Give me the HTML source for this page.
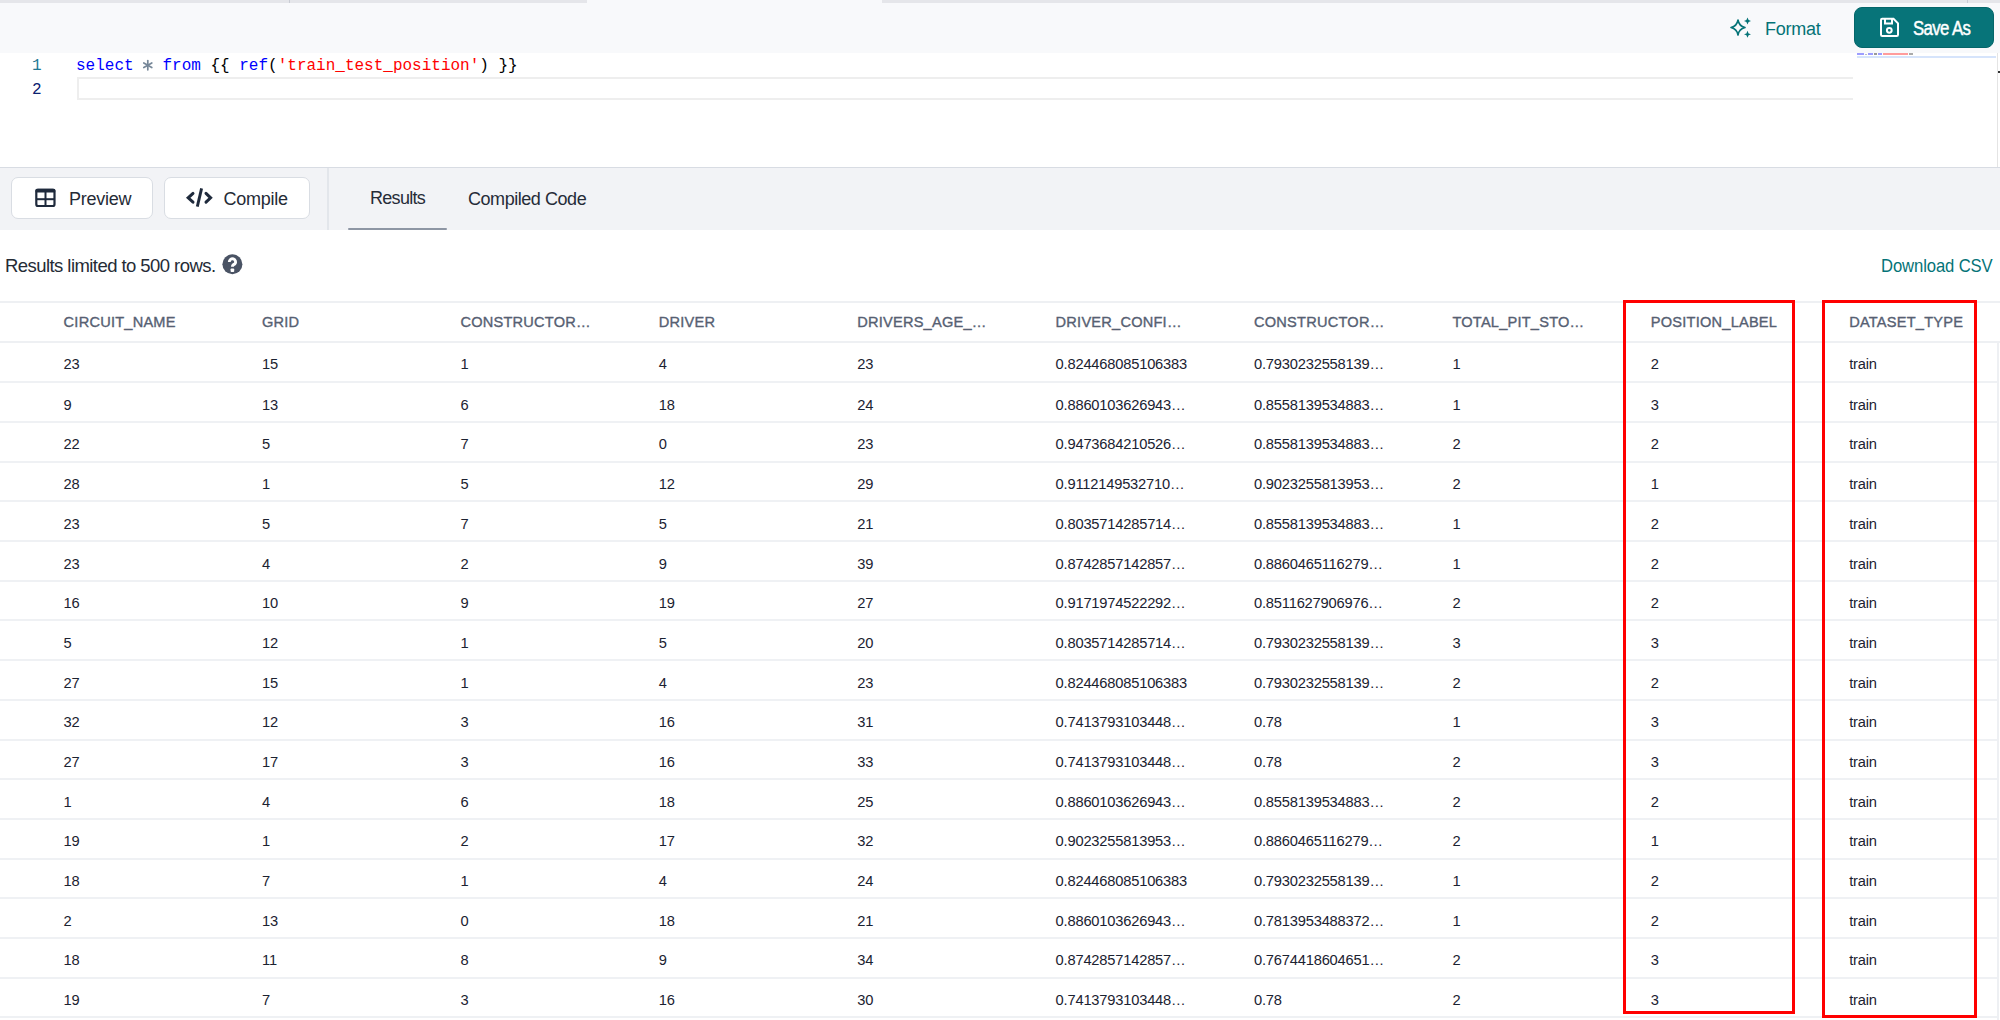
<!DOCTYPE html>
<html><head><meta charset="utf-8">
<style>
html,body{margin:0;padding:0;width:2000px;height:1020px;overflow:hidden;background:#fff;}
body{position:relative;font-family:"Liberation Sans",sans-serif;}
.abs{position:absolute;}
#topbar{position:absolute;left:0;top:0;width:2000px;height:53px;background:#f8f9fb;}
.tstrip{position:absolute;top:0;height:3px;background:#e5e6ea;}
#editor{position:absolute;left:0;top:53px;width:2000px;height:114px;background:#fff;}
.ln{position:absolute;font-family:"Liberation Mono",monospace;font-size:16px;line-height:24px;white-space:pre;}
.code{position:absolute;left:76px;top:54.3px;font-family:"Liberation Mono",monospace;font-size:16px;line-height:24px;white-space:pre;color:#000;}
.kw{color:#0000ff}.op{color:#778899}.str{color:#ff0000}.pn{color:#000}
#curline{position:absolute;left:76.5px;top:77px;width:1776px;height:23px;box-sizing:border-box;border:2.5px solid #eeeeee;border-right:none;}
#toolbar{position:absolute;left:0;top:167px;width:2000px;height:63px;background:#f2f3f6;border-top:1.5px solid #d8dce3;box-sizing:border-box;}
.btn{position:absolute;top:177px;height:42px;background:#fff;border:1.5px solid #d9dde3;border-radius:7px;box-sizing:border-box;}
.btxt{position:absolute;font-size:18px;line-height:20px;color:#252b36;white-space:pre;}
.tab{position:absolute;font-size:18px;line-height:20px;color:#262c38;white-space:pre;}
.th{position:absolute;font-size:14.6px;line-height:18px;color:#566072;white-space:pre;letter-spacing:0.22px;-webkit-text-stroke:0.35px #566072;}
.td{position:absolute;font-size:14.7px;line-height:18px;color:#1b2231;white-space:pre;letter-spacing:-0.2px;}
.hline{position:absolute;left:0;width:2000px;background:#eef0f3;}
.rline{position:absolute;left:0;width:1998px;height:2px;background:#eff1f4;}
.red{position:absolute;border:3px solid #ff0000;box-sizing:border-box;}
</style></head><body>
<div id="topbar">
  <div class="tstrip" style="left:0;width:587px"></div>
  <div class="tstrip" style="left:882px;width:1118px"></div>
  <div class="abs" style="left:289px;top:0;width:1px;height:3px;background:#c9ccd4"></div>
  <div class="abs" style="left:1967px;top:0;width:1px;height:3px;background:#c9ccd4"></div>
  <svg class="abs" style="left:1728px;top:17px" width="24" height="22" viewBox="0 0 24 22">
    <path d="M10 3 Q11 9 17 10.5 Q11 12 10 18 Q9 12 3 10.5 Q9 9 10 3 Z" fill="none" stroke="#047377" stroke-width="1.6" stroke-linejoin="round"/>
    <path d="M19.5 0.5 L20.6 3.1 L23 4 L20.6 4.9 L19.5 7.5 L18.4 4.9 L16 4 L18.4 3.1 Z" fill="#047377"/>
    <path d="M19.5 13.8 L20.6 16.4 L23 17.3 L20.6 18.2 L19.5 20.8 L18.4 18.2 L16 17.3 L18.4 16.4 Z" fill="#047377"/>
  </svg>
  <div class="abs" style="left:1765px;top:18.5px;font-size:18px;line-height:20px;color:#047377;letter-spacing:-0.25px;">Format</div>
  <div class="abs" style="left:1854px;top:6.5px;width:140px;height:41.5px;background:#077479;border:1px solid #04666a;box-sizing:border-box;border-radius:8px;"></div>
  <svg class="abs" style="left:1879px;top:17px" width="21" height="21" viewBox="0 0 21 21">
    <path d="M2 3 Q2 1.8 3.2 1.8 L14.5 1.8 L19 6.3 L19 17.8 Q19 19 17.8 19 L3.2 19 Q2 19 2 17.8 Z" fill="none" stroke="#fff" stroke-width="2"/>
    <path d="M6 2 L6 6.5 L13 6.5 L13 2" fill="none" stroke="#fff" stroke-width="2"/>
    <circle cx="10.3" cy="13.3" r="2.4" fill="none" stroke="#fff" stroke-width="2"/>
  </svg>
  <div class="abs" style="left:1912.5px;top:17px;font-size:19.5px;line-height:22px;color:#fff;letter-spacing:-0.7px;-webkit-text-stroke:0.45px #fff;transform-origin:0 0;transform:scaleX(0.86);white-space:pre">Save As</div>
</div>
<div id="editor"></div>
<div class="ln" style="left:32px;top:54.3px;color:#237893">1</div>
<div class="ln" style="left:32px;top:78.3px;color:#0b216f">2</div>
<div id="curline"></div>
<svg class="abs" style="left:140px;top:57px" width="16" height="16" viewBox="0 0 16 16">
  <g stroke="#778899" stroke-width="1.7" stroke-linecap="round"><line x1="7.8" y1="3.6" x2="7.8" y2="12.8"/><line x1="3.8" y1="5.9" x2="11.8" y2="10.5"/><line x1="3.8" y1="10.5" x2="11.8" y2="5.9"/></g>
</svg>
<div class="abs" style="left:1857px;top:52.5px;width:7px;height:2.2px;background:#9d9dff"></div>
<div class="abs" style="left:1865px;top:53.5px;width:2px;height:1.2px;background:#b8c0c8"></div>
<div class="abs" style="left:1868px;top:52.5px;width:5px;height:2.2px;background:#9d9dff"></div>
<div class="abs" style="left:1874px;top:52.5px;width:3px;height:2.2px;background:#999"></div>
<div class="abs" style="left:1878px;top:52.5px;width:4px;height:2.2px;background:#9d9dff"></div>
<div class="abs" style="left:1883px;top:52.5px;width:25px;height:2.2px;background:#ff9c9c"></div>
<div class="abs" style="left:1909px;top:52.5px;width:4px;height:2.2px;background:#aaa"></div>
<div class="abs" style="left:1997px;top:71px;width:3px;height:2px;background:#333"></div>

<div class="code"><span class="kw">select</span> <span class="op"> </span> <span class="kw">from</span> {{ <span class="kw">ref</span>(<span class="str">'train_test_position'</span>) }}</div>
<div class="abs" style="left:1997px;top:53px;width:1px;height:114px;background:#e4e4e4"></div>
<div class="abs" style="left:1857px;top:55.5px;width:139px;height:2px;background:#d6e4fb"></div>
<div id="toolbar"></div>
<div class="abs" style="left:327px;top:168px;width:1.5px;height:62px;background:#e3e6eb"></div>
<div class="btn" style="left:11px;width:142px"></div>
<svg class="abs" style="left:34px;top:187px" width="24" height="22" viewBox="0 0 24 22">
  <rect x="2.3" y="2.8" width="18.2" height="16.2" rx="1.8" fill="none" stroke="#1f2a3c" stroke-width="2.2"/>
  <rect x="1.4" y="1.7" width="20" height="3.8" rx="1.5" fill="#1f2a3c"/>
  <rect x="10.5" y="4" width="2" height="15" fill="#1f2a3c"/>
  <rect x="2" y="11.2" width="19" height="2" fill="#1f2a3c"/>
</svg>
<div class="btxt" style="left:69px;top:189px;letter-spacing:-0.25px">Preview</div>
<div class="btn" style="left:164px;width:145.5px"></div>
<svg class="abs" style="left:184px;top:186px" width="32" height="24" viewBox="0 0 32 24">
  <path d="M9 7.4 L4.2 11.8 L9 16.2" fill="none" stroke="#1f2a3c" stroke-width="3" stroke-linecap="round" stroke-linejoin="miter"/>
  <path d="M22 7.4 L26.6 11.8 L22 16.2" fill="none" stroke="#1f2a3c" stroke-width="3" stroke-linecap="round" stroke-linejoin="miter"/>
  <path d="M13.3 20.6 L17.6 2.3" fill="none" stroke="#1f2a3c" stroke-width="2.9" stroke-linecap="butt"/>
</svg>
<div class="btxt" style="left:223.5px;top:189px;letter-spacing:-0.25px">Compile</div>
<div class="tab" style="left:370px;top:188px;letter-spacing:-0.7px">Results</div>
<div class="tab" style="left:468px;top:188.5px;letter-spacing:-0.45px">Compiled Code</div>
<div class="abs" style="left:348px;top:227.5px;width:98.5px;height:2.5px;background:#8e96a4;border-radius:1px"></div>

<div class="abs" style="left:5px;top:255px;font-size:18.5px;line-height:22px;color:#252b36;letter-spacing:-0.56px;white-space:pre">Results limited to 500 rows.</div>
<svg class="abs" style="left:222px;top:253.5px" width="21" height="21" viewBox="0 0 21 21">
  <circle cx="10.4" cy="10.3" r="10" fill="#4a5364"/>
  <path d="M7.3 8 A3.15 3.15 0 1 1 12.9 9.9 Q10.4 11.1 10.4 12.8" fill="none" stroke="#fff" stroke-width="2.9" stroke-linecap="butt"/>
  <rect x="8.6" y="14.4" width="3.6" height="3.6" rx="0.8" fill="#fff"/>
</svg>
<div class="abs" style="left:1881px;top:255px;font-size:18.5px;line-height:22px;color:#047377;letter-spacing:-0.12px;white-space:pre;transform-origin:0 0;transform:scaleX(0.9)">Download CSV</div>

<div class="hline" style="top:300.8px;height:2px"></div>
<div class="th" style="left:63.6px;top:313px">CIRCUIT_NAME</div>
<div class="th" style="left:262.0px;top:313px">GRID</div>
<div class="th" style="left:460.4px;top:313px">CONSTRUCTOR…</div>
<div class="th" style="left:658.8px;top:313px">DRIVER</div>
<div class="th" style="left:857.2px;top:313px">DRIVERS_AGE_…</div>
<div class="th" style="left:1055.6px;top:313px">DRIVER_CONFI…</div>
<div class="th" style="left:1254.0px;top:313px">CONSTRUCTOR…</div>
<div class="th" style="left:1452.4px;top:313px">TOTAL_PIT_STO…</div>
<div class="th" style="left:1650.8px;top:313px">POSITION_LABEL</div>
<div class="th" style="left:1849.2px;top:313px">DATASET_TYPE</div>
<div class="hline" style="top:340.5px;height:2px"></div>
<div class="td" style="left:63.6px;top:355.30px">23</div>
<div class="td" style="left:262.0px;top:355.30px">15</div>
<div class="td" style="left:460.4px;top:355.30px">1</div>
<div class="td" style="left:658.8px;top:355.30px">4</div>
<div class="td" style="left:857.2px;top:355.30px">23</div>
<div class="td" style="left:1055.6px;top:355.30px">0.824468085106383</div>
<div class="td" style="left:1254.0px;top:355.30px">0.7930232558139…</div>
<div class="td" style="left:1452.4px;top:355.30px">1</div>
<div class="td" style="left:1650.8px;top:355.30px">2</div>
<div class="td" style="left:1849.2px;top:355.30px">train</div>
<div class="rline" style="top:381.30px"></div>
<div class="td" style="left:63.6px;top:395.79px">9</div>
<div class="td" style="left:262.0px;top:395.79px">13</div>
<div class="td" style="left:460.4px;top:395.79px">6</div>
<div class="td" style="left:658.8px;top:395.79px">18</div>
<div class="td" style="left:857.2px;top:395.79px">24</div>
<div class="td" style="left:1055.6px;top:395.79px">0.8860103626943…</div>
<div class="td" style="left:1254.0px;top:395.79px">0.8558139534883…</div>
<div class="td" style="left:1452.4px;top:395.79px">1</div>
<div class="td" style="left:1650.8px;top:395.79px">3</div>
<div class="td" style="left:1849.2px;top:395.79px">train</div>
<div class="rline" style="top:420.99px"></div>
<div class="td" style="left:63.6px;top:435.48px">22</div>
<div class="td" style="left:262.0px;top:435.48px">5</div>
<div class="td" style="left:460.4px;top:435.48px">7</div>
<div class="td" style="left:658.8px;top:435.48px">0</div>
<div class="td" style="left:857.2px;top:435.48px">23</div>
<div class="td" style="left:1055.6px;top:435.48px">0.9473684210526…</div>
<div class="td" style="left:1254.0px;top:435.48px">0.8558139534883…</div>
<div class="td" style="left:1452.4px;top:435.48px">2</div>
<div class="td" style="left:1650.8px;top:435.48px">2</div>
<div class="td" style="left:1849.2px;top:435.48px">train</div>
<div class="rline" style="top:460.68px"></div>
<div class="td" style="left:63.6px;top:475.17px">28</div>
<div class="td" style="left:262.0px;top:475.17px">1</div>
<div class="td" style="left:460.4px;top:475.17px">5</div>
<div class="td" style="left:658.8px;top:475.17px">12</div>
<div class="td" style="left:857.2px;top:475.17px">29</div>
<div class="td" style="left:1055.6px;top:475.17px">0.9112149532710…</div>
<div class="td" style="left:1254.0px;top:475.17px">0.9023255813953…</div>
<div class="td" style="left:1452.4px;top:475.17px">2</div>
<div class="td" style="left:1650.8px;top:475.17px">1</div>
<div class="td" style="left:1849.2px;top:475.17px">train</div>
<div class="rline" style="top:500.37px"></div>
<div class="td" style="left:63.6px;top:514.86px">23</div>
<div class="td" style="left:262.0px;top:514.86px">5</div>
<div class="td" style="left:460.4px;top:514.86px">7</div>
<div class="td" style="left:658.8px;top:514.86px">5</div>
<div class="td" style="left:857.2px;top:514.86px">21</div>
<div class="td" style="left:1055.6px;top:514.86px">0.8035714285714…</div>
<div class="td" style="left:1254.0px;top:514.86px">0.8558139534883…</div>
<div class="td" style="left:1452.4px;top:514.86px">1</div>
<div class="td" style="left:1650.8px;top:514.86px">2</div>
<div class="td" style="left:1849.2px;top:514.86px">train</div>
<div class="rline" style="top:540.06px"></div>
<div class="td" style="left:63.6px;top:554.55px">23</div>
<div class="td" style="left:262.0px;top:554.55px">4</div>
<div class="td" style="left:460.4px;top:554.55px">2</div>
<div class="td" style="left:658.8px;top:554.55px">9</div>
<div class="td" style="left:857.2px;top:554.55px">39</div>
<div class="td" style="left:1055.6px;top:554.55px">0.8742857142857…</div>
<div class="td" style="left:1254.0px;top:554.55px">0.8860465116279…</div>
<div class="td" style="left:1452.4px;top:554.55px">1</div>
<div class="td" style="left:1650.8px;top:554.55px">2</div>
<div class="td" style="left:1849.2px;top:554.55px">train</div>
<div class="rline" style="top:579.75px"></div>
<div class="td" style="left:63.6px;top:594.24px">16</div>
<div class="td" style="left:262.0px;top:594.24px">10</div>
<div class="td" style="left:460.4px;top:594.24px">9</div>
<div class="td" style="left:658.8px;top:594.24px">19</div>
<div class="td" style="left:857.2px;top:594.24px">27</div>
<div class="td" style="left:1055.6px;top:594.24px">0.9171974522292…</div>
<div class="td" style="left:1254.0px;top:594.24px">0.8511627906976…</div>
<div class="td" style="left:1452.4px;top:594.24px">2</div>
<div class="td" style="left:1650.8px;top:594.24px">2</div>
<div class="td" style="left:1849.2px;top:594.24px">train</div>
<div class="rline" style="top:619.44px"></div>
<div class="td" style="left:63.6px;top:633.93px">5</div>
<div class="td" style="left:262.0px;top:633.93px">12</div>
<div class="td" style="left:460.4px;top:633.93px">1</div>
<div class="td" style="left:658.8px;top:633.93px">5</div>
<div class="td" style="left:857.2px;top:633.93px">20</div>
<div class="td" style="left:1055.6px;top:633.93px">0.8035714285714…</div>
<div class="td" style="left:1254.0px;top:633.93px">0.7930232558139…</div>
<div class="td" style="left:1452.4px;top:633.93px">3</div>
<div class="td" style="left:1650.8px;top:633.93px">3</div>
<div class="td" style="left:1849.2px;top:633.93px">train</div>
<div class="rline" style="top:659.13px"></div>
<div class="td" style="left:63.6px;top:673.62px">27</div>
<div class="td" style="left:262.0px;top:673.62px">15</div>
<div class="td" style="left:460.4px;top:673.62px">1</div>
<div class="td" style="left:658.8px;top:673.62px">4</div>
<div class="td" style="left:857.2px;top:673.62px">23</div>
<div class="td" style="left:1055.6px;top:673.62px">0.824468085106383</div>
<div class="td" style="left:1254.0px;top:673.62px">0.7930232558139…</div>
<div class="td" style="left:1452.4px;top:673.62px">2</div>
<div class="td" style="left:1650.8px;top:673.62px">2</div>
<div class="td" style="left:1849.2px;top:673.62px">train</div>
<div class="rline" style="top:698.82px"></div>
<div class="td" style="left:63.6px;top:713.31px">32</div>
<div class="td" style="left:262.0px;top:713.31px">12</div>
<div class="td" style="left:460.4px;top:713.31px">3</div>
<div class="td" style="left:658.8px;top:713.31px">16</div>
<div class="td" style="left:857.2px;top:713.31px">31</div>
<div class="td" style="left:1055.6px;top:713.31px">0.7413793103448…</div>
<div class="td" style="left:1254.0px;top:713.31px">0.78</div>
<div class="td" style="left:1452.4px;top:713.31px">1</div>
<div class="td" style="left:1650.8px;top:713.31px">3</div>
<div class="td" style="left:1849.2px;top:713.31px">train</div>
<div class="rline" style="top:738.51px"></div>
<div class="td" style="left:63.6px;top:753.00px">27</div>
<div class="td" style="left:262.0px;top:753.00px">17</div>
<div class="td" style="left:460.4px;top:753.00px">3</div>
<div class="td" style="left:658.8px;top:753.00px">16</div>
<div class="td" style="left:857.2px;top:753.00px">33</div>
<div class="td" style="left:1055.6px;top:753.00px">0.7413793103448…</div>
<div class="td" style="left:1254.0px;top:753.00px">0.78</div>
<div class="td" style="left:1452.4px;top:753.00px">2</div>
<div class="td" style="left:1650.8px;top:753.00px">3</div>
<div class="td" style="left:1849.2px;top:753.00px">train</div>
<div class="rline" style="top:778.20px"></div>
<div class="td" style="left:63.6px;top:792.69px">1</div>
<div class="td" style="left:262.0px;top:792.69px">4</div>
<div class="td" style="left:460.4px;top:792.69px">6</div>
<div class="td" style="left:658.8px;top:792.69px">18</div>
<div class="td" style="left:857.2px;top:792.69px">25</div>
<div class="td" style="left:1055.6px;top:792.69px">0.8860103626943…</div>
<div class="td" style="left:1254.0px;top:792.69px">0.8558139534883…</div>
<div class="td" style="left:1452.4px;top:792.69px">2</div>
<div class="td" style="left:1650.8px;top:792.69px">2</div>
<div class="td" style="left:1849.2px;top:792.69px">train</div>
<div class="rline" style="top:817.89px"></div>
<div class="td" style="left:63.6px;top:832.38px">19</div>
<div class="td" style="left:262.0px;top:832.38px">1</div>
<div class="td" style="left:460.4px;top:832.38px">2</div>
<div class="td" style="left:658.8px;top:832.38px">17</div>
<div class="td" style="left:857.2px;top:832.38px">32</div>
<div class="td" style="left:1055.6px;top:832.38px">0.9023255813953…</div>
<div class="td" style="left:1254.0px;top:832.38px">0.8860465116279…</div>
<div class="td" style="left:1452.4px;top:832.38px">2</div>
<div class="td" style="left:1650.8px;top:832.38px">1</div>
<div class="td" style="left:1849.2px;top:832.38px">train</div>
<div class="rline" style="top:857.58px"></div>
<div class="td" style="left:63.6px;top:872.07px">18</div>
<div class="td" style="left:262.0px;top:872.07px">7</div>
<div class="td" style="left:460.4px;top:872.07px">1</div>
<div class="td" style="left:658.8px;top:872.07px">4</div>
<div class="td" style="left:857.2px;top:872.07px">24</div>
<div class="td" style="left:1055.6px;top:872.07px">0.824468085106383</div>
<div class="td" style="left:1254.0px;top:872.07px">0.7930232558139…</div>
<div class="td" style="left:1452.4px;top:872.07px">1</div>
<div class="td" style="left:1650.8px;top:872.07px">2</div>
<div class="td" style="left:1849.2px;top:872.07px">train</div>
<div class="rline" style="top:897.27px"></div>
<div class="td" style="left:63.6px;top:911.76px">2</div>
<div class="td" style="left:262.0px;top:911.76px">13</div>
<div class="td" style="left:460.4px;top:911.76px">0</div>
<div class="td" style="left:658.8px;top:911.76px">18</div>
<div class="td" style="left:857.2px;top:911.76px">21</div>
<div class="td" style="left:1055.6px;top:911.76px">0.8860103626943…</div>
<div class="td" style="left:1254.0px;top:911.76px">0.7813953488372…</div>
<div class="td" style="left:1452.4px;top:911.76px">1</div>
<div class="td" style="left:1650.8px;top:911.76px">2</div>
<div class="td" style="left:1849.2px;top:911.76px">train</div>
<div class="rline" style="top:936.96px"></div>
<div class="td" style="left:63.6px;top:951.45px">18</div>
<div class="td" style="left:262.0px;top:951.45px">11</div>
<div class="td" style="left:460.4px;top:951.45px">8</div>
<div class="td" style="left:658.8px;top:951.45px">9</div>
<div class="td" style="left:857.2px;top:951.45px">34</div>
<div class="td" style="left:1055.6px;top:951.45px">0.8742857142857…</div>
<div class="td" style="left:1254.0px;top:951.45px">0.7674418604651…</div>
<div class="td" style="left:1452.4px;top:951.45px">2</div>
<div class="td" style="left:1650.8px;top:951.45px">3</div>
<div class="td" style="left:1849.2px;top:951.45px">train</div>
<div class="rline" style="top:976.65px"></div>
<div class="td" style="left:63.6px;top:991.14px">19</div>
<div class="td" style="left:262.0px;top:991.14px">7</div>
<div class="td" style="left:460.4px;top:991.14px">3</div>
<div class="td" style="left:658.8px;top:991.14px">16</div>
<div class="td" style="left:857.2px;top:991.14px">30</div>
<div class="td" style="left:1055.6px;top:991.14px">0.7413793103448…</div>
<div class="td" style="left:1254.0px;top:991.14px">0.78</div>
<div class="td" style="left:1452.4px;top:991.14px">2</div>
<div class="td" style="left:1650.8px;top:991.14px">3</div>
<div class="td" style="left:1849.2px;top:991.14px">train</div>
<div class="rline" style="top:1016.34px"></div>

<div class="abs" style="left:1997px;top:341px;width:1.5px;height:679px;background:#eef0f3"></div>
<div class="red" style="left:1623px;top:300px;width:172px;height:714px"></div>
<div class="red" style="left:1822px;top:300px;width:155px;height:718px"></div>
</body></html>
